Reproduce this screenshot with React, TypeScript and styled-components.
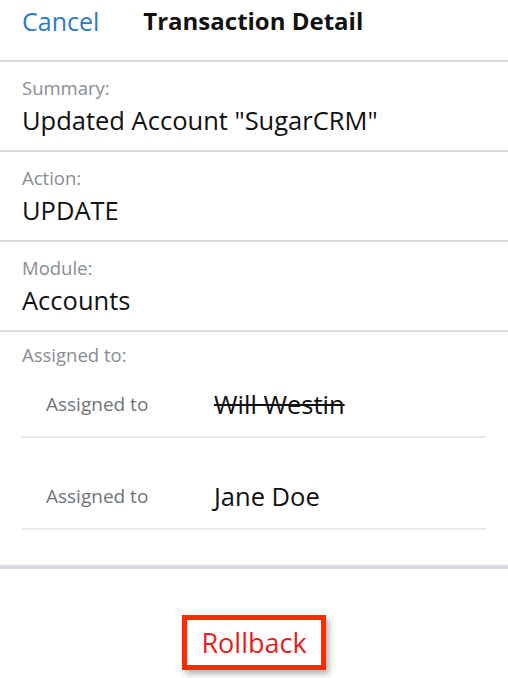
import React from "react";
import styled, { createGlobalStyle } from "styled-components";

const Global = createGlobalStyle`
  html, body { margin: 0; padding: 0; background: #fff; }
  body { font-family: "Open Sans", "Noto Sans", sans-serif; -webkit-font-smoothing: antialiased; }
  * { box-sizing: border-box; }
`;

const Page = styled.div`
  width: 508px;
  height: 678px;
  overflow: hidden;
  display: flex;
  flex-direction: column;
  background: #fff;
`;

const Header = styled.header`
  height: 62px;
  flex-shrink: 0;
  display: flex;
  align-items: center;
  gap: 44px;
  padding: 0 0 19px 22px;
  border-bottom: 2px solid #d7dce2;
`;

const CancelButton = styled.span`
  color: #2b7bcb;
  font-size: 25px;
  line-height: 32px;
`;

const Title = styled.h1`
  margin: 0;
  font-size: 24px;
  line-height: 32px;
  font-weight: 700;
  color: #111;
`;

const Section = styled.section<{ $top?: number; $bottom?: number }>`
  flex-shrink: 0;
  padding: ${(p) => p.$top ?? 14}px 22px ${(p) => p.$bottom ?? 13}px 22px;
  border-bottom: 2px solid #d9dde2;
  display: flex;
  flex-direction: column;
`;

const Label = styled.div`
  font-size: 18.5px;
  line-height: 24px;
  color: #878d95;
`;

const Value = styled.div`
  margin-top: 4px;
  font-size: 25.5px;
  line-height: 33px;
  color: #111;
`;

const SubList = styled.div`
  display: flex;
  flex-direction: column;
  gap: 26px;
  padding-top: 5px;
`;

const SubRow = styled.div`
  height: 66px;
  display: flex;
  align-items: flex-start;
  padding: 16px 0 0 24px;
  border-bottom: 2px solid #e6e8eb;
`;

const SubLabel = styled.div`
  width: 168px;
  font-size: 19px;
  line-height: 32px;
  color: #6e737a;
`;

const SubValue = styled.div<{ $old?: boolean }>`
  font-size: 25.5px;
  line-height: 32px;
  color: #111;
  text-decoration: ${(p) => (p.$old ? "line-through" : "none")};
  text-decoration-thickness: 2px;
`;

const Footer = styled.div`
  flex: 1;
  display: flex;
  justify-content: center;
  align-items: flex-start;
  padding-top: 46px;
  border-top: 2px solid #d3dbe6;
`;

const RollbackButton = styled.button`
  width: 144px;
  height: 55px;
  padding: 0;
  background: #fff;
  border: 5px solid #ff2a00;
  box-shadow: 3px 4px 6px rgba(0, 0, 0, 0.3);
  color: #e4201c;
  font-family: "Open Sans", "Noto Sans", sans-serif;
  font-size: 27px;
  line-height: 32px;
  cursor: pointer;
`;

export default function App() {
  return (
    <Page>
      <Global />
      <Header>
        <CancelButton>Cancel</CancelButton>
        <Title>Transaction Detail</Title>
      </Header>
      <Section>
        <Label>Summary:</Label>
        <Value>Updated Account "SugarCRM"</Value>
      </Section>
      <Section>
        <Label>Action:</Label>
        <Value>UPDATE</Value>
      </Section>
      <Section>
        <Label>Module:</Label>
        <Value>Accounts</Value>
      </Section>
      <Section $top={11} $bottom={35}>
        <Label>Assigned to:</Label>
        <SubList>
          <SubRow>
            <SubLabel>Assigned to</SubLabel>
            <SubValue $old>Will Westin</SubValue>
          </SubRow>
          <SubRow>
            <SubLabel>Assigned to</SubLabel>
            <SubValue>Jane Doe</SubValue>
          </SubRow>
        </SubList>
      </Section>
      <Footer>
        <RollbackButton>Rollback</RollbackButton>
      </Footer>
    </Page>
  );
}
